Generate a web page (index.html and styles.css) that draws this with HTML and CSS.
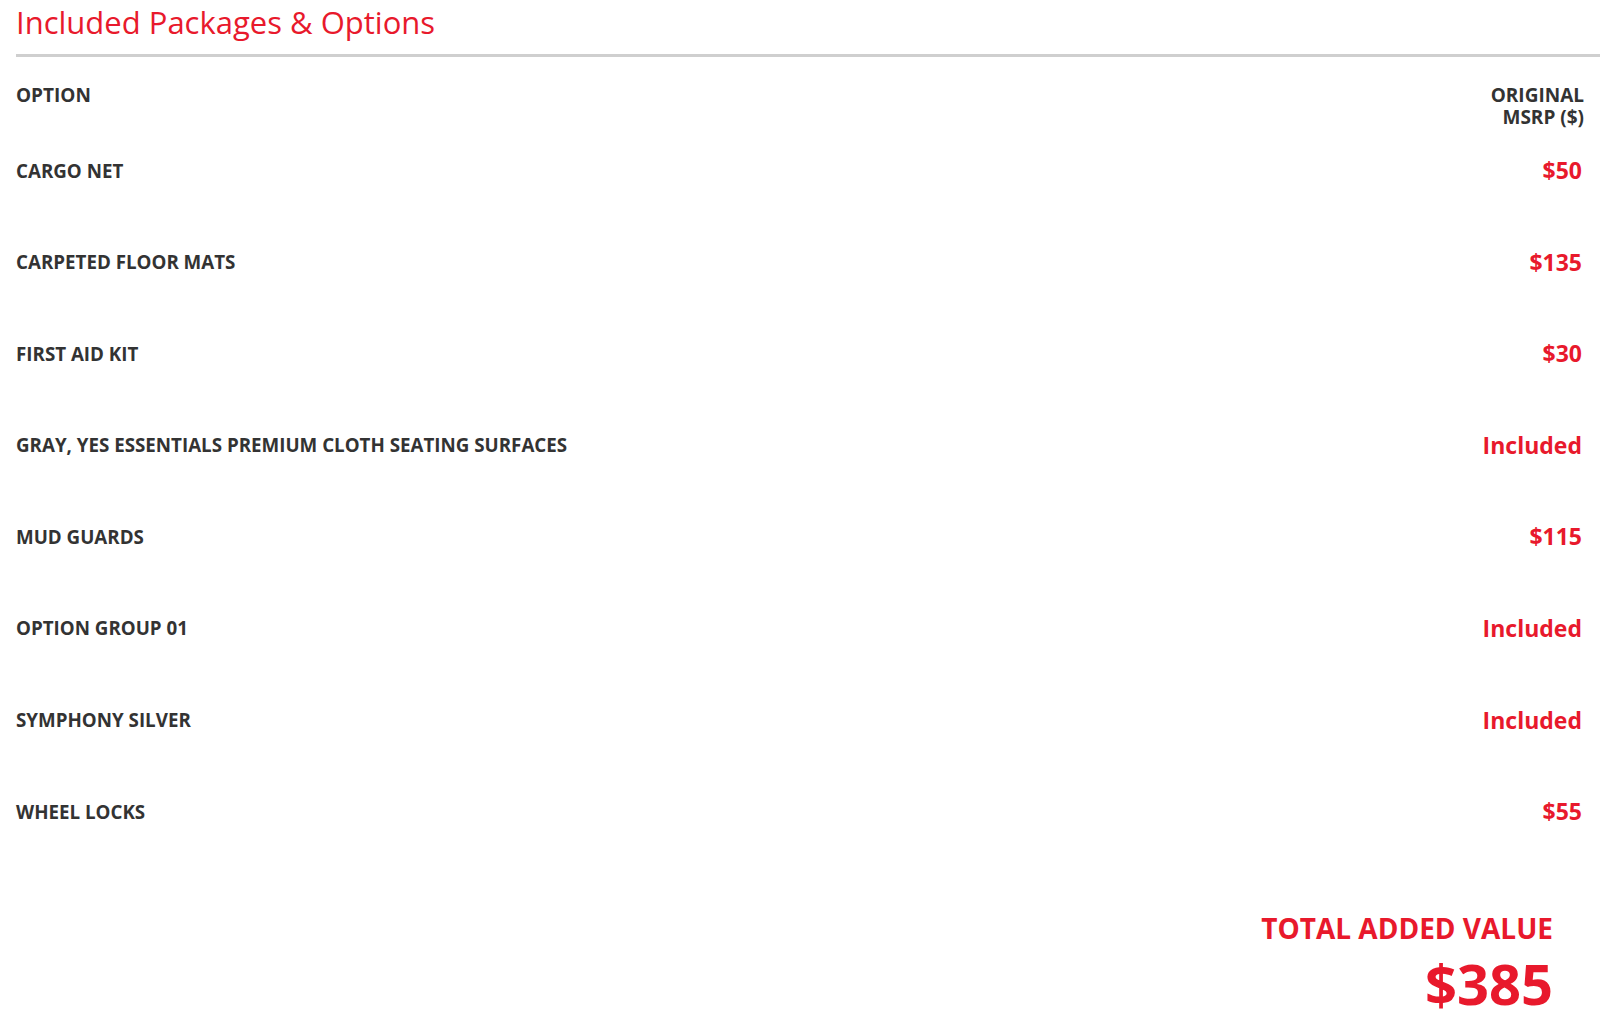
FILE: index.html
```html
<!DOCTYPE html>
<html lang="en">
<head>
    <meta charset="UTF-8">
    <meta name="viewport" content="width=device-width, initial-scale=1.0">
    <title>Included Packages &amp; Options</title>
    <link rel="stylesheet" href="styles.css">
</head>
<body>
    <section class="options-section">
        <h2 class="section-title">Included Packages &amp; Options</h2>

        <div class="options-table">
            <div class="options-head">
                <span class="col-option">OPTION</span>
                <span class="col-price">ORIGINAL<br>MSRP ($)</span>
            </div>
            <div class="option-row">
                <span class="option-name">CARGO NET</span>
                <span class="option-price">$50</span>
            </div>
            <div class="option-row">
                <span class="option-name">CARPETED FLOOR MATS</span>
                <span class="option-price">$135</span>
            </div>
            <div class="option-row">
                <span class="option-name">FIRST AID KIT</span>
                <span class="option-price">$30</span>
            </div>
            <div class="option-row">
                <span class="option-name">GRAY, YES ESSENTIALS PREMIUM CLOTH SEATING SURFACES</span>
                <span class="option-price">Included</span>
            </div>
            <div class="option-row">
                <span class="option-name">MUD GUARDS</span>
                <span class="option-price">$115</span>
            </div>
            <div class="option-row">
                <span class="option-name">OPTION GROUP 01</span>
                <span class="option-price">Included</span>
            </div>
            <div class="option-row">
                <span class="option-name">SYMPHONY SILVER</span>
                <span class="option-price">Included</span>
            </div>
            <div class="option-row">
                <span class="option-name">WHEEL LOCKS</span>
                <span class="option-price">$55</span>
            </div>
        </div>

        <div class="total-block">
            <p class="total-label">TOTAL ADDED VALUE</p>
            <p class="total-value">$385</p>
        </div>
    </section>
</body>
</html>
```

FILE: styles.css
```css
body {
    font-family: 'Open Sans', 'Liberation Sans', sans-serif;
    margin: 0;
    background-color: #fff;
    color: #333;
}

.options-section {
    padding-left: 16px;
}

.section-title {
    margin: 0;
    font-size: 31px;
    font-weight: 400;
    line-height: 45px;
    color: #e8192c;
    padding-bottom: 9px;
    border-bottom: 3px solid #cfcfcf; /* 제목 아래 회색 구분선 */
}

.options-table {
    padding-right: 16px;
}

.options-head {
    display: flex;
    justify-content: space-between;
    align-items: flex-start;
    margin-top: 27px;
    font-size: 19px;
    font-weight: 700;
    line-height: 22px;
}

.col-price {
    text-align: right;
}

.option-row {
    display: flex;
    justify-content: space-between;
    align-items: center;
    height: 24px;
    padding: 30px 0 37.6px;
}

.option-name {
    font-size: 18.75px;
    font-weight: 700;
}

.option-price {
    padding-right: 2px;
    font-size: 23px;
    font-weight: 700;
    color: #e8192c;
}

.total-block {
    margin-top: 50px;
    padding-right: 47px;
    text-align: right;
    color: #e8192c;
    font-weight: 700;
}

.total-label {
    margin: 0;
    font-size: 28px;
    line-height: 34px;
}

.total-value {
    margin: 9px 0 0;
    font-size: 56px;
    line-height: 59px;
}
```
